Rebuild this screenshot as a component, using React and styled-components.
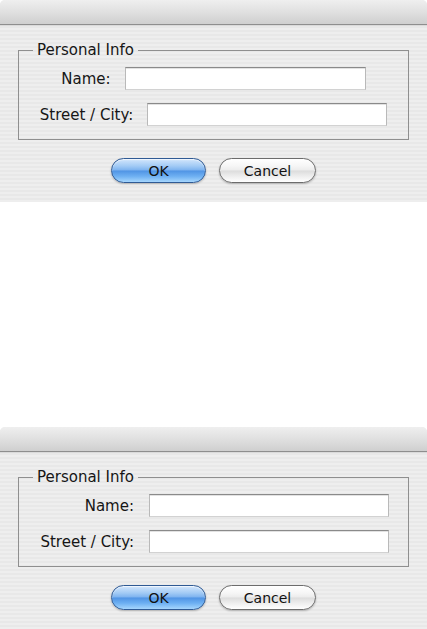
import React from "react";
import styled, { createGlobalStyle } from "styled-components";

const GlobalStyle = createGlobalStyle`
  html, body {
    margin: 0;
    padding: 0;
    background: #ffffff;
  }
  body {
    font-family: "DejaVu Sans", "Liberation Sans", sans-serif;
    color: #161616;
  }
`;

const Page = styled.div`
  display: flex;
  flex-direction: column;
  gap: 225px;
  width: 427px;
`;

const Window = styled.div`
  width: 427px;
  height: 202px;
  border-radius: 5px 5px 0 0;
  overflow: hidden;
  background: repeating-linear-gradient(
    to bottom,
    #eeeeee 0px,
    #eeeeee 2px,
    #e8e8e8 2px,
    #e8e8e8 4px
  );
  display: flex;
  flex-direction: column;
`;

const TitleBar = styled.div`
  height: 24px;
  flex-shrink: 0;
  background: linear-gradient(to bottom, #efefef 0%, #e0e0e0 50%, #cfcfcf 100%);
  border-bottom: 1px solid #8e8e8e;
  box-shadow: 0 1px 0 #dadada;
`;

const Body = styled.div`
  padding: 17px 18px 0;
  display: flex;
  flex-direction: column;
`;

const Group = styled.fieldset`
  margin: 0;
  padding: 9px 15px 13px;
  border: 1px solid #8f8f8f;
  display: flex;
  flex-direction: column;
  gap: 13px;
  min-width: 0;
`;

const Legend = styled.legend`
  margin-left: -1px;
  padding: 0 4px;
  font-size: 15px;
  line-height: 16px;
  color: #161616;
`;

const Row = styled.div`
  display: flex;
  align-items: center;
  justify-content: center;
  gap: 14px;
`;

const FormGrid = styled.div`
  display: grid;
  grid-template-columns: auto 240px;
  justify-content: end;
  align-items: center;
  column-gap: 15px;
  row-gap: 13px;
  padding-right: 4px;
`;

const Label = styled.label`
  font-size: 15px;
  color: #161616;
  text-align: right;
  white-space: nowrap;
`;

const Field = styled.input`
  box-sizing: border-box;
  width: ${(p) => p.$width || 240}px;
  height: 23px;
  margin: 0;
  padding: 2px 4px;
  background: #ffffff;
  border: 1px solid #b9b9b9;
  border-top-color: #8a8a8a;
  border-bottom-color: #d2d2d2;
  box-shadow: inset 0 1px 0 #e2e2e2;
  font: inherit;
  font-size: 13px;
  outline: none;
`;

const Buttons = styled.div`
  display: flex;
  justify-content: center;
  gap: 13px;
  margin-top: 18px;
`;

const Button = styled.button`
  box-sizing: border-box;
  width: ${(p) => p.$width}px;
  height: 25px;
  padding: 0;
  border-radius: 13px;
  font-family: inherit;
  font-size: 14px;
  color: #111111;
  cursor: default;
  border: 1px solid ${(p) => (p.$primary ? "#2f5a94" : "#6c6c6c")};
  background: ${(p) =>
    p.$primary
      ? "linear-gradient(to bottom, #d3e6fc 0%, #a3cbf5 30%, #7cb2ef 49%, #4f93e4 51%, #6eb0f2 75%, #a6d6fd 100%)"
      : "linear-gradient(to bottom, #ffffff 0%, #f6f6f6 30%, #ececec 49%, #dcdcdc 51%, #eeeeee 75%, #ffffff 100%)"};
  box-shadow: 0 1px 2px rgba(0, 0, 0, 0.25), inset 0 1px 1px rgba(255, 255, 255, 0.7);
`;

const Dialog = ({ aligned }) => (
  <Window>
    <TitleBar />
    <Body>
      <Group>
        <Legend>Personal Info</Legend>
        {aligned ? (
          <FormGrid>
            <Label htmlFor="name-b">Name:</Label>
            <Field id="name-b" />
            <Label htmlFor="city-b">Street / City:</Label>
            <Field id="city-b" />
          </FormGrid>
        ) : (
          <>
            <Row>
              <Label htmlFor="name-a">Name:</Label>
              <Field id="name-a" $width={241} />
            </Row>
            <Row>
              <Label htmlFor="city-a">Street / City:</Label>
              <Field id="city-a" />
            </Row>
          </>
        )}
      </Group>
      <Buttons>
        <Button $primary $width={95}>OK</Button>
        <Button $width={97}>Cancel</Button>
      </Buttons>
    </Body>
  </Window>
);

const App = () => (
  <>
    <GlobalStyle />
    <Page>
      <Dialog />
      <Dialog aligned />
    </Page>
  </>
);

export default App;
